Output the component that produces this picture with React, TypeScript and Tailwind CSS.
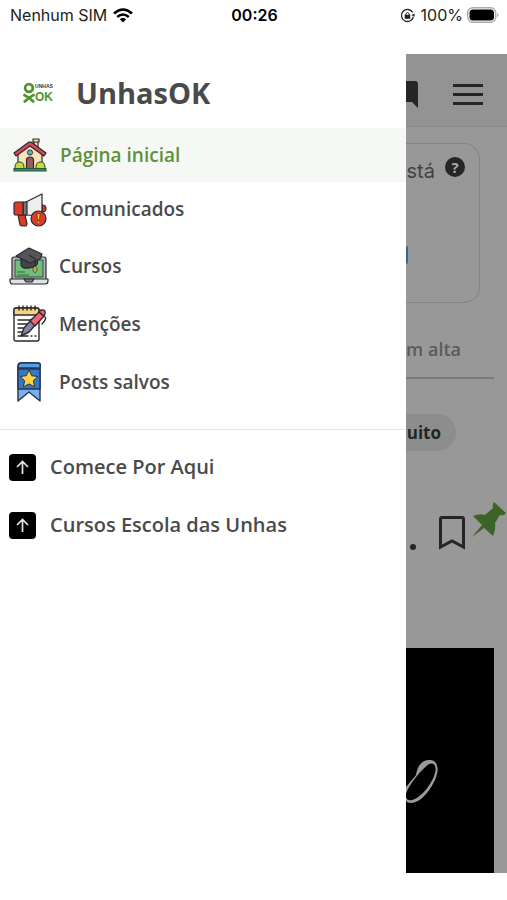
import type { ReactNode } from "react";

const ink = "#2b2b2b";

function HouseIcon() {
  return (
    <svg width="34" height="34" viewBox="0 0 34 34" stroke={ink} strokeWidth="1.2" strokeLinejoin="round" aria-hidden="true">
      <path d="M21 2h4v11h-4z" fill="#f8dfae" />
      <path d="M20 1h6v3h-6z" fill="#f8dfae" />
      <path d="M5 14 17 5l12 9v17H5z" fill="#fbe3b8" />
      <path d="M1 15 16 4h2l15 11-2 3L17 8 3 18z" fill="#d9475f" />
      <circle cx="17" cy="14.500" r="2.600" fill="#4fb6c3" strokeWidth=".9" />
      <path d="M13.500 31V22q0-3 3.500-3t3.500 3v9z" fill="#9a5a5c" />
      <path d="M2 31v-2q0-5 4.500-5t4.500 5v2zM23 31v-2q0-5 4.500-5t4.500 5v2z" fill="#bfdc38" strokeWidth=".9" />
      <path d="M1 30.500h32V33H1z" fill="#3d8b63" stroke="#28573f" />
    </svg>
  );
}

function MegaphoneIcon() {
  return (
    <svg width="34" height="34" viewBox="0 0 34 34" stroke={ink} strokeWidth="1.2" strokeLinejoin="round" aria-hidden="true">
      <path d="M29 12q4 0 4 3.500T29 19z" fill="#dc3b2a" />
      <path d="M5 22h7l2 9-1 2H9l-2-1z" fill="#dc3b2a" />
      <path d="M13 9 29 1v22l-16-1z" fill="#eeeeef" />
      <path d="M10 9h4v13h-4z" fill="#777779" />
      <path d="M3 9h7v13H3q-2 0-2-2v-9q0-2 2-2z" fill="#dc3b2a" />
      <circle cx="25.500" cy="25.500" r="7.500" fill="#dc3b2a" />
      <path d="M24 20.500h3l-.5 6h-2z" fill="#ffd23f" strokeWidth=".6" />
      <circle cx="25.500" cy="29.500" r="1.300" fill="#ffd23f" strokeWidth=".6" />
    </svg>
  );
}

function CourseIcon() {
  return (
    <svg width="40" height="38" viewBox="0 0 40 38" stroke={ink} strokeWidth="1.2" strokeLinejoin="round" aria-hidden="true">
      <path d="M3 33V12q0-2 2-2h30q2 0 2 2v21z" fill="#aeb4bd" />
      <path d="M6 13h28v17H6z" fill="#6fbe7b" strokeWidth=".8" />
      <path d="M8 25h8M8 28h12" fill="none" stroke="#2f6745" />
      <path d="M1 32h38v2q0 3-3 3H4q-3 0-3-3z" fill="#dfe2e7" />
      <path d="M15 32h10l-2 3h-6z" fill="#7b8088" />
      <path d="M12 11v7q1 4 8.500 3t8-5v-6z" fill="#45434a" />
      <path d="M7 9 20 1l13 6-2 5-10 4z" fill="#56535c" />
      <path d="m20 8 6 4v8" fill="none" />
      <path d="m24 21 2-2 2 2v3l-2 2-2-2z" fill="#c3a943" strokeWidth=".6" />
    </svg>
  );
}

function NotesIcon() {
  return (
    <svg width="38" height="38" viewBox="-3 0 38 38" stroke={ink} strokeWidth="1.4" strokeLinejoin="round" strokeLinecap="round" aria-hidden="true">
      <path d="M1 5q0-2 2-2h21q2 0 2 2v29q0 2-2 2H3q-2 0-2-2z" fill="#fff" />
      <path d="M1 5q0-2 2-2h21q2 0 2 2v5H1z" fill="#f8d37f" />
      <path d="M6 1v4M10 1v4M14 1v4M18 1v4M22 1v4M5 15h13M5 19h10M5 23h8M5 27h6M5 31h10M18 31h1M22 31h1" fill="none" />
      <path d="m8 31 3-8 8-9 5 4-8 9z" fill="#8386a8" />
      <path d="m17 16 9-9 5 4-9 10z" fill="#f16479" />
      <path d="m26 7 2-2q5-1 4 4l-1 2z" fill="#f16479" />
      <path d="M32 12q2 2-3 7" fill="none" />
    </svg>
  );
}

function SavedIcon() {
  return (
    <svg width="26" height="40" viewBox="0 0 26 40" stroke="#23344c" strokeWidth="1.4" strokeLinejoin="round" aria-hidden="true">
      <path d="M2 4q0-3 3-3h17q3 0 2 3v35l-11-9-11 9z" fill="#78b0ee" />
      <path d="M2 7h22v20H2z" fill="#3478c8" />
      <path d="M5 1h17q3 0 2 5H2q0-5 3-5z" fill="#5c9ce3" />
      <path d="m13 8 2.700 5.700 6.200.8-4.500 4.200 1.200 6.200-5.600-3-5.600 3 1.200-6.200-4.500-4.200 6.200-.8z" fill="#ffd23f" strokeWidth="1" />
    </svg>
  );
}

function ArrowBadge() {
  return (
    <svg width="27" height="27" viewBox="0 0 27 27" aria-hidden="true">
      <rect width="27" height="27" rx="4" fill="#000" />
      <path d="M13.500 20V8M8 13l5.500-5.500L19 13" fill="none" stroke="#e5e5e5" strokeWidth="1.700" />
    </svg>
  );
}

function BrandLogo() {
  return (
    <span className="flex h-[26px] w-[30px] items-center font-['Liberation_Sans',sans-serif] font-bold">
      <svg width="13" height="24" viewBox="0 0 13 24" fill="none" stroke="#55922b" strokeWidth="3" aria-hidden="true">
        <circle cx="6.500" cy="6.500" r="4.200" />
        <path d="M.5 13.500q6 3 11.500 8.500M12.500 13.500Q6.500 16.500 1 22" />
      </svg>
      <span className="flex flex-col items-center">
        <span className="text-[5px] leading-[7px] text-[#333]">UNHAS</span>
        <span className="text-[12px] leading-[14px] text-[#55922b]">OK</span>
      </span>
    </span>
  );
}

function StatusBar() {
  return (
    <header className="grid h-[54px] grid-cols-3 items-start pl-2.5 pr-2 pt-1 font-['Inter',sans-serif] text-base leading-[22px] text-[#222]">
      <div className="flex items-center gap-1.5 whitespace-nowrap">
        <span>Nenhum SIM</span>
        <svg width="20" height="15" viewBox="0 0 20 15" fill="none" stroke="#000" strokeWidth="2.600" aria-label="Wi-Fi">
          <path d="M1 5.500q9-8 18 0M4.200 9q5.800-5 11.600 0" />
          <path d="M6.800 11.300q3.200-2.400 6.400 0L10 14.500z" fill="#000" stroke="none" />
        </svg>
      </div>
      <time className="text-center text-base font-semibold leading-[22px] text-black">00:26</time>
      <div className="flex items-center justify-end whitespace-nowrap">
        <svg width="15" height="15" viewBox="0 0 15 15" fill="none" stroke="#222" strokeWidth="1.300" aria-label="Rotação bloqueada">
          <path d="M12.600 4.300A6 6 0 1 0 13.300 9" />
          <path d="m11.400 7 3.200-1.600-.2 3.600z" fill="#222" stroke="none" />
          <path d="M4.700 6.800h5.600v4H4.700z" fill="#222" stroke="none" />
          <path d="M5.800 7V5.800q1.700-2.600 3.400 0V7" strokeWidth="1" />
        </svg>
        <span className="ml-1.5 mr-1">100%</span>
        <svg width="32" height="16" viewBox="0 0 32 16" aria-label="Bateria cheia">
          <rect x=".7" y=".7" width="28" height="14.600" rx="5" fill="none" stroke="#aaa" strokeWidth="1.400" />
          <rect x="2.500" y="2.500" width="24.500" height="11" rx="3.500" fill="#000" />
          <path d="M30.200 5.500q2.600 2.500 0 5z" fill="#aaa" />
        </svg>
      </div>
    </header>
  );
}

type Item = { label: string; icon: ReactNode };

const sections: Item[] = [
  { label: "Cursos", icon: <CourseIcon /> },
  { label: "Menções", icon: <NotesIcon /> },
  { label: "Posts salvos", icon: <SavedIcon /> },
];

const shortcuts = ["Comece Por Aqui", "Cursos Escola das Unhas"];

function Drawer() {
  return (
    <nav className="w-4/5 bg-white font-semibold text-[#4a4a4a]" aria-label="Menu principal">
      <div className="flex h-[74px] items-center gap-[23px] px-[23px] pt-1">
        <BrandLogo />
        <h1 className="text-[29px] font-bold leading-10">UnhasOK</h1>
      </div>
      <a href="#inicio" aria-current="page" className="flex h-[54px] items-center gap-2.5 bg-[#f6f8f6] px-2.5 text-[#5c9238]">
        <span className="flex w-10 justify-center"><HouseIcon /></span>
        <span>Página inicial</span>
      </a>
      <a href="#comunicados" className="flex h-[55px] items-center gap-2.5 px-2.5">
        <span className="flex w-10 justify-center"><MegaphoneIcon /></span>
        <span>Comunicados</span>
      </a>
      <ul>
        {sections.map(({ label, icon }) => (
          <li key={label}>
            <a href="#secao" className="flex h-[58px] items-center gap-2.5 px-[9px]">
              <span className="flex w-10 justify-center">{icon}</span>
              <span>{label}</span>
            </a>
          </li>
        ))}
      </ul>
      <ul className="mt-[18px] border-t border-[#e6e6e6] pt-2 text-xl">
        {shortcuts.map((label) => (
          <li key={label}>
            <a href="#atalho" className="flex h-[58px] items-center gap-[14px] px-[9px]">
              <ArrowBadge />
              <span>{label}</span>
            </a>
          </li>
        ))}
      </ul>
    </nav>
  );
}

function PageBehind() {
  return (
    <main className="flex min-w-0 flex-1 flex-col overflow-hidden bg-[#989898]">
      <div className="flex h-[73px] items-center justify-between border-b border-[#8a8a8a] bg-[#939393] pr-6 pt-2">
        <svg width="12" height="27" viewBox="0 0 12 27" aria-hidden="true">
          <path d="M0 0h9q3 0 3 3v24l-6-6H0z" fill="#252525" />
        </svg>
        <button type="button" aria-label="Abrir menu" className="flex w-[30px] flex-col gap-[6px]">
          <span className="h-[3px] bg-[#252525]" />
          <span className="h-[3px] bg-[#252525]" />
          <span className="h-[3px] bg-[#252525]" />
        </button>
      </div>

      <section className="mr-[27px] mt-4 h-[160px] rounded-r-[16px] border border-l-0 border-[#858585] pr-3.5 pt-[13px]">
        <div className="flex items-start justify-end gap-2.5">
          <span className="pt-0.5 font-['Inter',sans-serif] text-[20px] leading-6 text-[#424242]">stá</span>
          <button type="button" aria-label="Ajuda" className="h-5 w-5 rounded-full bg-[#252525] text-center text-[15px] font-bold leading-5 text-[#aaa]">
            ?
          </button>
        </div>
        <div className="mt-[63px] h-[18px] w-[2px] rounded-r-full bg-[#2d6d86]" />
      </section>

      <div className="mr-[13px] mt-7 flex h-[48px] justify-end overflow-hidden whitespace-nowrap border-b-2 border-[#7a7a7a] pr-[33px] pt-1.5 text-lg font-semibold leading-6 text-[#5b5b5b]">
        Em alta
      </div>
      <button type="button" className="mr-[51px] mt-[35px] flex h-[37px] items-center justify-end rounded-r-full bg-[#8d8d8d] pr-[15px] text-[17px] font-bold text-[#252525]">
        uito
      </button>

      <div className="flex flex-1 flex-col pt-[51px]">
        <article className="flex flex-1 flex-col">
          <div className="flex h-[146px] items-start">
            <span className="ml-1 mt-[42px] h-1.5 w-1.5 shrink-0 rounded-full bg-[#252525]" />
            <button type="button" aria-label="Salvar publicação" className="ml-[23px] mt-[14px] shrink-0">
              <svg width="26" height="34" viewBox="0 0 26 34" fill="none" stroke="#252525" strokeWidth="3" aria-hidden="true">
                <path d="M1.500 3q0-1.500 1.500-1.500h20q1.500 0 1.500 1.500v28L13 25 1.500 31z" />
              </svg>
            </button>
            <svg className="ml-[6px] shrink-0" width="36" height="36" viewBox="0 0 36 36" fill="#3d6428" aria-label="Fixado">
              <path d="M23 0 35 11q-2 3-6 2l-5 8q1 7-2 13l-9-8L1 35l10-12-9-9q7-3 12-1l8-7q-1-3 1-6z" />
            </svg>
          </div>
          <div className="mr-[13px] flex-1 bg-black pt-28">
            <svg width="34" height="46" viewBox="0 0 34 46" fill="#9a9a9a" fillRule="evenodd" aria-hidden="true">
              <path d="M0 27 10 15C11 7 15 1 22 0 30-1 33 6 31 14 28 26 16 43 5 43 2 43 0 42 0 40zM0 34C-1 39 2 41 6 40 15 38 26 24 29 13 31 6 28 2 23 4 17 8 3 24 0 34z" />
            </svg>
          </div>
        </article>
      </div>
    </main>
  );
}

export default function App() {
  return (
    <div className="flex min-h-screen flex-col bg-white pb-[27px]">
      <StatusBar />
      <div className="flex flex-1 font-['Open_Sans','Noto_Sans',sans-serif] text-[19px]">
        <Drawer />
        <PageBehind />
      </div>
    </div>
  );
}
